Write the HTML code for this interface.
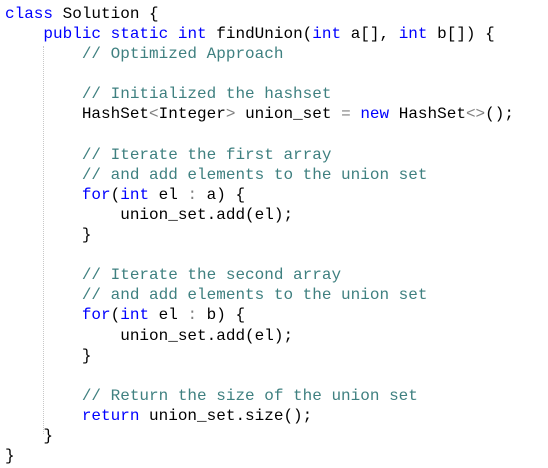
<!DOCTYPE html>
<html><head><meta charset="utf-8"><style>
html,body{margin:0;padding:0;background:#fff;width:548px;height:468px;overflow:hidden}
pre{margin:0;padding:4px 0 0 5px;font-family:"Liberation Mono",monospace;font-size:16px;line-height:20.1px;color:#000;position:relative}
.k{color:#0000ff}.c{color:#3f8080}.g{color:#808080}
.guide{position:absolute;left:43px;top:46px;height:388px;border-left:1px dotted #c8c8c8}
</style></head><body>
<div class="guide"></div>
<pre><span class="k">class</span> Solution {
    <span class="k">public</span> <span class="k">static</span> <span class="k">int</span> findUnion(<span class="k">int</span> a[], <span class="k">int</span> b[]) {
        <span class="c">// Optimized Approach</span>

        <span class="c">// Initialized the hashset</span>
        HashSet<span class="g">&lt;</span>Integer<span class="g">&gt;</span> union_set <span class="g">=</span> <span class="k">new</span> HashSet<span class="g">&lt;&gt;</span>();

        <span class="c">// Iterate the first array</span>
        <span class="c">// and add elements to the union set</span>
        <span class="k">for</span>(<span class="k">int</span> el <span class="g">:</span> a) {
            union_set.add(el);
        }

        <span class="c">// Iterate the second array</span>
        <span class="c">// and add elements to the union set</span>
        <span class="k">for</span>(<span class="k">int</span> el <span class="g">:</span> b) {
            union_set.add(el);
        }

        <span class="c">// Return the size of the union set</span>
        <span class="k">return</span> union_set.size();
    }
}</pre>
</body></html>
